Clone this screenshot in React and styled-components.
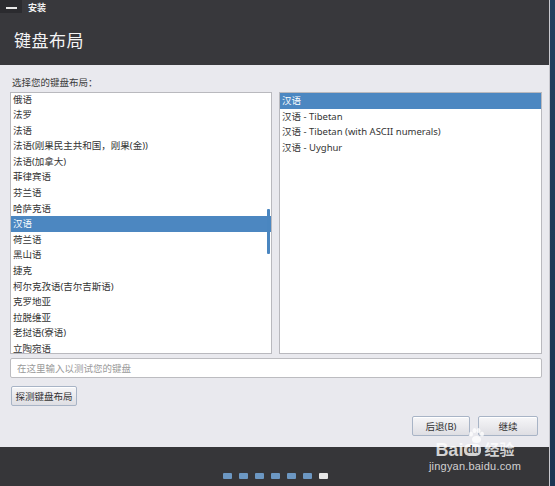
import React from 'react';
import styled, { createGlobalStyle } from 'styled-components';

const GlobalStyle = createGlobalStyle`
  html, body {
    margin: 0;
    padding: 0;
    background: #1e3a58;
  }
  * {
    box-sizing: border-box;
  }
`;

const FONT = `"Noto Sans", "Noto Sans CJK SC", sans-serif`;

const Screen = styled.div`
  width: 555px;
  height: 486px;
  display: flex;
  position: relative;
  overflow: hidden;
  font-family: ${FONT};
`;

const Window = styled.div`
  width: 550px;
  display: flex;
  flex-direction: column;
  border-right: 1px solid #c9c9cf;
`;

const EdgeStrip = styled.div`
  flex: 1;
  background: linear-gradient(180deg, #22405f, #1b3552);
`;

const Header = styled.header`
  height: 65px;
  background: #38383c;
  display: flex;
  flex-direction: column;
`;

const TitleBar = styled.div`
  height: 17px;
  display: flex;
  align-items: flex-start;
  gap: 6px;
`;

const MinButton = styled.div`
  width: 22px;
  height: 13px;
  background: #2b2b2f;
  display: flex;
  align-items: center;
  justify-content: center;
  &::after {
    content: '';
    width: 11px;
    height: 2px;
    background: #e8e8e8;
    margin-top: 3px;
  }
`;

const TitleText = styled.span`
  font-size: 9px;
  font-weight: bold;
  color: #f0f0f0;
  line-height: 16px;
`;

const PageTitle = styled.h1`
  margin: 0;
  padding: 10px 0 0 14px;
  font-size: 17px;
  font-weight: normal;
  color: #f4f4f4;
  letter-spacing: 0.5px;
`;

const Content = styled.main`
  flex: 1;
  background: #e9e9ee;
  padding: 12px 7px 0 10px;
  display: flex;
  flex-direction: column;
`;

const Label = styled.div`
  font-size: 9.5px;
  color: #3a3a3a;
  line-height: 12px;
  padding-left: 2px;
  margin-bottom: 3px;
`;

const ListsRow = styled.div`
  display: grid;
  grid-template-columns: 262px 263px;
  gap: 7px;
`;

const ListBox = styled.div`
  height: 262px;
  background: #ffffff;
  border: 1px solid #b9b9be;
  overflow: hidden;
  position: relative;
`;

const ListInner = styled.div`
  margin-top: ${(p) => p.$offset}px;
`;

const Row = styled.div`
  height: 15.6px;
  line-height: 15.6px;
  padding-left: 2px;
  font-size: 9.5px;
  white-space: nowrap;
  color: ${(p) => (p.$selected ? '#ffffff' : '#333333')};
  background: ${(p) => (p.$selected ? '#4c87c1' : 'transparent')};
`;

const ScrollThumb = styled.div`
  position: absolute;
  right: 1px;
  top: 116px;
  width: 3px;
  height: 45px;
  background: #4a86c0;
  border-radius: 1px;
`;

const TestInput = styled.input`
  margin-top: 4px;
  height: 20px;
  width: 532px;
  border: 1px solid #bcbcc0;
  border-radius: 2px;
  background: #ffffff;
  font-family: ${FONT};
  font-size: 9.5px;
  padding: 0 6px;
  color: #333;
  outline: none;
  &::placeholder {
    color: #9a9a9a;
  }
`;

const Button = styled.button`
  height: 20px;
  width: ${(p) => p.$width}px;
  padding: 0;
  border: 1px solid #a8b4c6;
  border-radius: 2px;
  background: linear-gradient(180deg, #f6f6f8, #dedee3);
  font-family: ${FONT};
  font-size: 9.5px;
  color: #333;
  box-shadow: inset 0 1px 0 #ffffff;
`;

const DetectRow = styled.div`
  margin-top: 5px;
  padding-left: 1px;
`;

const NavRow = styled.div`
  margin-top: 10px;
  display: flex;
  justify-content: flex-end;
  gap: 8px;
  padding-right: 4px;
`;

const BottomBar = styled.footer`
  height: 39px;
  background: #363639;
  display: flex;
  align-items: flex-end;
  justify-content: center;
  padding-bottom: 7px;
  gap: 7px;
  padding-left: 2px;
`;

const Dot = styled.span`
  width: 9px;
  height: 6px;
  border-radius: 1px;
  background: ${(p) => (p.$active ? '#e6e6e6' : '#6c97c2')};
`;

const Watermark = styled.div`
  position: absolute;
  left: 425px;
  top: 428px;
  width: 100px;
  color: rgba(255, 255, 255, 0.78);
  font-family: "Liberation Sans", "Noto Sans CJK SC", sans-serif;
  display: flex;
  flex-direction: column;
  align-items: center;
  pointer-events: none;
`;

const WmTop = styled.div`
  display: flex;
  align-items: center;
  font-size: 18px;
  font-weight: bold;
  line-height: 20px;
  margin-top: 12px;
  gap: 1px;
`;

const WmDu = styled.span`
  font-size: 10px;
  background: rgba(255, 255, 255, 0.78);
  color: #444;
  border-radius: 5px;
  padding: 0 2px;
  line-height: 12px;
`;

const WmCn = styled.span`
  font-size: 15px;
  margin-left: 3px;
`;

const WmSmall = styled.div`
  font-size: 11px;
  line-height: 12px;
  letter-spacing: 0.2px;
`;

const Paw = styled.svg`
  position: absolute;
  left: 42px;
  top: 0;
`;

const leftItems = [
  '俄语',
  '法罗',
  '法语',
  '法语(刚果民主共和国，刚果(金))',
  '法语(加拿大)',
  '菲律宾语',
  '芬兰语',
  '哈萨克语',
  '汉语',
  '荷兰语',
  '黑山语',
  '捷克',
  '柯尔克孜语(吉尔吉斯语)',
  '克罗地亚',
  '拉脱维亚',
  '老挝语(寮语)',
  '立陶宛语',
];

const rightItems = [
  '汉语',
  '汉语 - Tibetan',
  '汉语 - Tibetan (with ASCII numerals)',
  '汉语 - Uyghur',
];

const App = () => {
  return (
    <Screen>
      <GlobalStyle />
      <Window>
        <Header>
          <TitleBar>
            <MinButton />
            <TitleText>安装</TitleText>
          </TitleBar>
          <PageTitle>键盘布局</PageTitle>
        </Header>

        <Content>
          <Label>选择您的键盘布局：</Label>
          <ListsRow>
            <ListBox>
              <ListInner $offset={-1.5}>
                {leftItems.map((item) => (
                  <Row key={item} $selected={item === '汉语'}>
                    {item}
                  </Row>
                ))}
              </ListInner>
              <ScrollThumb />
            </ListBox>
            <ListBox>
              <ListInner $offset={0}>
                {rightItems.map((item, i) => (
                  <Row key={item} $selected={i === 0}>
                    {item}
                  </Row>
                ))}
              </ListInner>
            </ListBox>
          </ListsRow>

          <TestInput placeholder="在这里输入以测试您的键盘" />

          <DetectRow>
            <Button $width={66}>探测键盘布局</Button>
          </DetectRow>

          <NavRow>
            <Button $width={58}>后退(B)</Button>
            <Button $width={60}>继续</Button>
          </NavRow>
        </Content>

        <BottomBar>
          {[0, 1, 2, 3, 4, 5, 6].map((i) => (
            <Dot key={i} $active={i === 6} />
          ))}
        </BottomBar>
      </Window>
      <EdgeStrip />

      <Watermark>
        <Paw width="18" height="16" viewBox="0 0 18 16">
          <g fill="rgba(255,255,255,0.78)">
            <ellipse cx="4" cy="6" rx="2" ry="2.5" />
            <ellipse cx="7.5" cy="2.5" rx="2" ry="2.5" />
            <ellipse cx="11.5" cy="2.5" rx="2" ry="2.5" />
            <ellipse cx="15" cy="6" rx="2" ry="2.5" />
            <ellipse cx="9.5" cy="11.5" rx="4.5" ry="3.5" />
          </g>
        </Paw>
        <WmTop>
          <span>Bai</span>
          <WmDu>du</WmDu>
          <WmCn>经验</WmCn>
        </WmTop>
        <WmSmall>jingyan.baidu.com</WmSmall>
      </Watermark>
    </Screen>
  );
};

export default App;
